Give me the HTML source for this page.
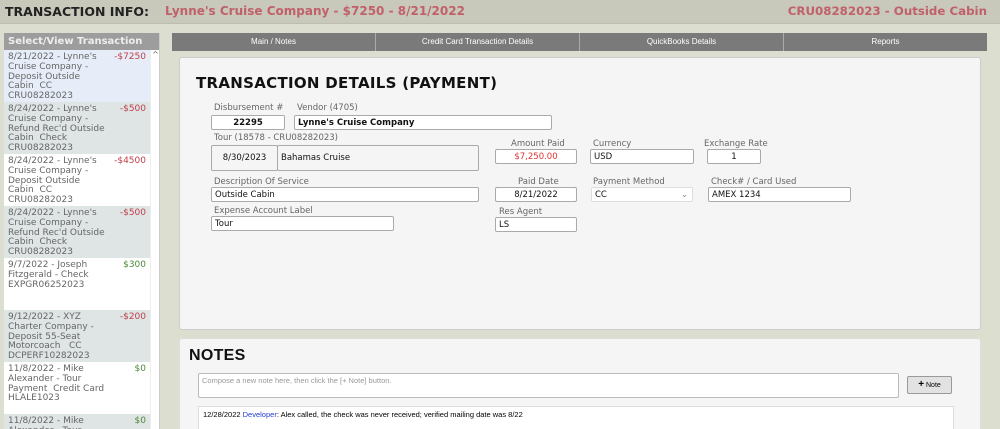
<!DOCTYPE html>
<html><head><meta charset="utf-8"><style>
*{box-sizing:border-box;margin:0;padding:0}
html{width:1000px;height:429px;overflow:hidden}
body{width:1000px;height:429px;overflow:hidden;background:#dcdecf;font-family:"DejaVu Sans","Liberation Sans",sans-serif;position:relative}
.hdr{position:absolute;left:0;top:0;width:1000px;height:24px;background:#c9c9bb;border-bottom:1px solid #bdbdb0}
.hdr .t{position:absolute;left:5px;top:4px;font-weight:bold;font-size:12.5px;color:#222}
.hdr .a{position:absolute;left:165px;top:4px;font-weight:bold;font-size:12px;color:#c0606a}
.hdr .b{position:absolute;right:13px;top:4px;font-weight:bold;font-size:11.8px;color:#c0606a}
.left{position:absolute;left:4px;top:33px;width:156px;height:396px;background:#fff;border-right:1px solid #ccc;overflow:hidden}
.lt{height:17px;background:#9d9d9d;color:#eee;font-weight:bold;font-size:10px;padding:3px 0 0 4px;white-space:nowrap}
.it{position:absolute;left:0;width:146px;height:52px;font-size:9px;line-height:9.8px;color:#666;padding:3px 0 0 4px;overflow:hidden}
.it .v{position:absolute;right:4px;top:3px;color:#c0404a}
.it .g{color:#4a8a3a}
.sc{position:absolute;left:146px;top:17px;width:10px;height:379px;background:#fff;border-left:1px solid #eee}
.tabs{position:absolute;left:172px;top:33px;width:815px;height:18px;display:flex;background:#7a7a7a}
.tabs div{flex:1;color:#fff;font-family:"Liberation Sans",sans-serif;font-size:8px;text-align:center;line-height:18px;border-right:1px solid #aaa}
.panel{position:absolute;left:179px;top:57px;width:802px;height:273px;background:#f5f5f5;border:1px solid #ccc;border-radius:3px}
.np{position:absolute;left:179px;top:338px;width:802px;height:91px;background:#f5f5f5;border:1px solid #ddd;border-bottom:none;border-radius:3px 3px 0 0;overflow:hidden}
h1{position:absolute;font-size:15px;font-weight:bold;color:#111;letter-spacing:.3px}
.l{position:absolute;font-size:8.5px;color:#666}
.f{position:absolute;height:15px;background:#fff;border:1px solid #aaa;border-radius:2px;font-size:8.5px;padding:2px 3px;color:#111}
</style></head><body>
<div class="hdr"><span class="t">TRANSACTION INFO:</span><span class="a">Lynne's Cruise Company - $7250 - 8/21/2022</span><span class="b">CRU08282023 - Outside Cabin</span></div>
<div class="left"><div class="lt">Select/View Transaction</div>
<div class="it" style="top:17px;background:#e6edf8">8/21/2022 - Lynne's<br>Cruise Company -<br>Deposit Outside<br>Cabin&nbsp; CC<br>CRU08282023<span class="v">-$7250</span></div>
<div class="it" style="top:69px;background:#dfe4e4">8/24/2022 - Lynne's<br>Cruise Company -<br>Refund Rec'd Outside<br>Cabin&nbsp; Check<br>CRU08282023<span class="v">-$500</span></div>
<div class="it" style="top:121px;background:#fff">8/24/2022 - Lynne's<br>Cruise Company -<br>Deposit Outside<br>Cabin&nbsp; CC<br>CRU08282023<span class="v">-$4500</span></div>
<div class="it" style="top:173px;background:#dfe4e4">8/24/2022 - Lynne's<br>Cruise Company -<br>Refund Rec'd Outside<br>Cabin&nbsp; Check<br>CRU08282023<span class="v">-$500</span></div>
<div class="it" style="top:225px;background:#fff">9/7/2022 - Joseph<br>Fitzgerald - Check<br>EXPGR06252023<span class="v g">$300</span></div>
<div class="it" style="top:277px;background:#dfe4e4">9/12/2022 - XYZ<br>Charter Company -<br>Deposit 55-Seat<br>Motorcoach&nbsp;&nbsp; CC<br>DCPERF10282023<span class="v">-$200</span></div>
<div class="it" style="top:329px;background:#fff">11/8/2022 - Mike<br>Alexander - Tour<br>Payment&nbsp; Credit Card<br>HLALE1023<span class="v g">$0</span></div>
<div class="it" style="top:381px;background:#dfe4e4;height:15px">11/8/2022 - Mike<br>Alexander - Tour<span class="v g">$0</span></div>
<div class="sc"><div style="font-size:8px;color:#666;text-align:center">^</div></div>
</div>
<div class="tabs"><div>Main / Notes</div><div>Credit Card Transaction Details</div><div>QuickBooks Details</div><div style="border:none">Reports</div></div>
<div class="panel">
<h1 style="left:16px;top:16px">TRANSACTION DETAILS (PAYMENT)</h1>
<div class="l" style="left:34px;top:45px">Disbursement #</div><div class="l" style="left:117px;top:45px">Vendor (4705)</div>
<div class="f" style="left:31px;top:57px;width:74px;text-align:center;font-weight:bold">22295</div>
<div class="f" style="left:114px;top:57px;width:258px;font-weight:bold">Lynne's Cruise Company</div>
<div class="l" style="left:34px;top:75px">Tour (18578 - CRU08282023)</div>
<div class="f" style="left:31px;top:87px;width:67px;height:26px;text-align:center;padding-top:7px;background:#f5f5f5">8/30/2023</div>
<div class="f" style="left:97px;top:87px;width:202px;height:26px;padding-top:7px;background:#f5f5f5">Bahamas Cruise</div>
<div class="l" style="left:331px;top:81px">Amount Paid</div>
<div class="f" style="left:315px;top:91px;width:82px;text-align:center;color:#e03030">$7,250.00</div>
<div class="l" style="left:413px;top:81px">Currency</div>
<div class="f" style="left:410px;top:91px;width:104px">USD</div>
<div class="l" style="left:524px;top:81px">Exchange Rate</div>
<div class="f" style="left:527px;top:91px;width:54px;text-align:center">1</div>
<div class="l" style="left:34px;top:119px">Description Of Service</div>
<div class="f" style="left:31px;top:129px;width:268px">Outside Cabin</div>
<div class="l" style="left:338px;top:119px">Paid Date</div>
<div class="f" style="left:315px;top:129px;width:82px;text-align:center">8/21/2022</div>
<div class="l" style="left:413px;top:119px">Payment Method</div>
<div class="f" style="left:411px;top:129px;width:102px;border-color:#ddd">CC<span style="position:absolute;right:4px;color:#888">⌄</span></div>
<div class="l" style="left:531px;top:119px">Check# / Card Used</div>
<div class="f" style="left:528px;top:129px;width:143px">AMEX 1234</div>
<div class="l" style="left:34px;top:148px">Expense Account Label</div>
<div class="f" style="left:31px;top:158px;width:183px">Tour</div>
<div class="l" style="left:319px;top:149px">Res Agent</div>
<div class="f" style="left:315px;top:159px;width:82px">LS</div>
</div>
<div class="np">
<h1 style="left:9px;top:8px;font-family:'Liberation Sans',sans-serif;font-size:16px">NOTES</h1>
<div class="f" style="left:18px;top:34px;width:701px;height:25px;color:#999;font-family:'Liberation Sans',sans-serif;font-size:7.5px;border-color:#bbb">Compose a new note here, then click the [+ Note] button.</div>
<div style="position:absolute;left:727px;top:37px;width:45px;height:18px;background:#e2e2e2;border:1px solid #999;border-radius:2px;font-size:7px;text-align:center;line-height:16px;font-family:'Liberation Sans',sans-serif"><b style="font-size:10px">+</b> Note</div>
<div style="position:absolute;left:18px;top:67px;width:756px;height:30px;background:#fff;border:1px solid #ddd;font-family:'Liberation Sans',sans-serif;font-size:7.5px;padding:3px 4px">12/28/2022 <span style="color:#2040d0">Developer</span>: Alex called, the check was never received; verified mailing date was 8/22</div>
</div>
</body></html>
